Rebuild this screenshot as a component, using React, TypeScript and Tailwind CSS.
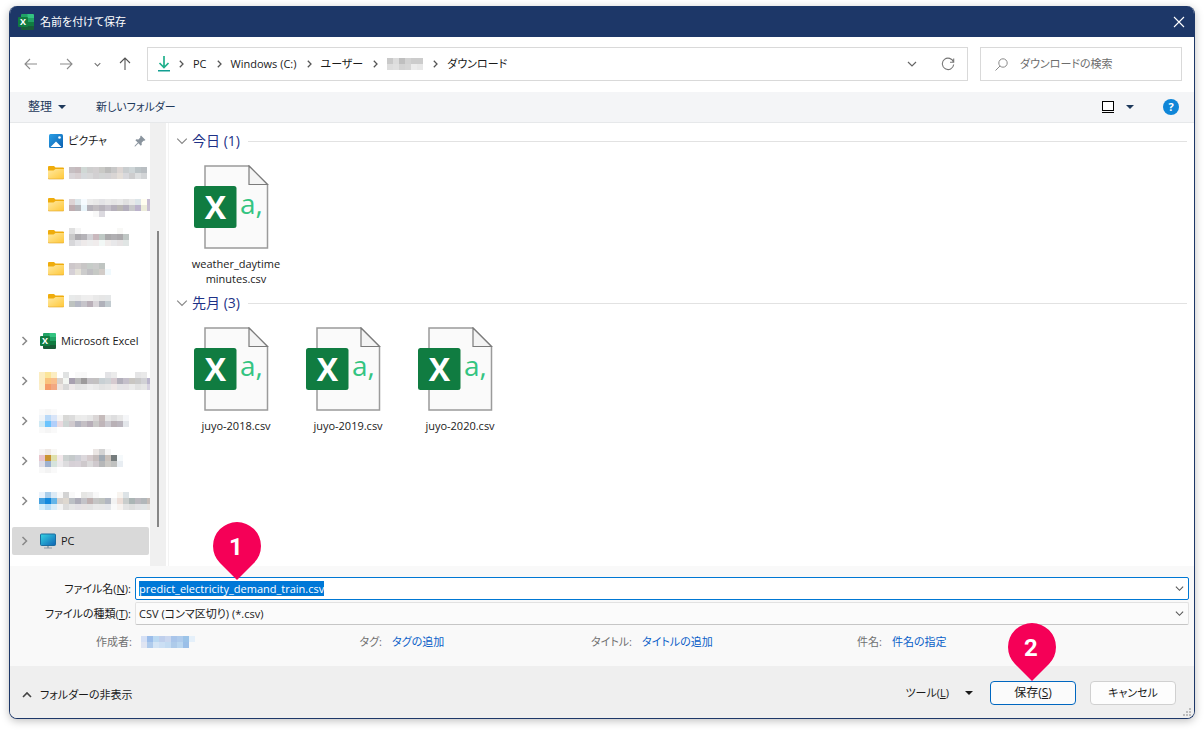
import React, { useEffect, useRef } from "react";

type MosaicProps = {
  rows: string[];
  className?: string;
};

// each row is a list of hex colours, "-" leaves the cell empty
function Mosaic({ rows, className }: MosaicProps) {
  const cells = rows.map((row) => row.split(" "));
  const cols = Math.max(...cells.map((row) => row.length));
  return (
    <svg
      width={cols * 6}
      height={rows.length * 6}
      shapeRendering="crispEdges"
      className={"shrink-0 " + (className || "")}
      aria-hidden="true"
    >
      {cells.map((row, y) =>
        row.map((c, x) =>
          c === "-" ? null : (
            <rect key={x + "-" + y} x={x * 6} y={y * 6} width="6" height="6" fill={"#" + c} />
          )
        )
      )}
    </svg>
  );
}

function ExcelIcon() {
  return (
    <svg width="16" height="16" viewBox="0 0 16 16" className="shrink-0" aria-hidden="true">
      <path d="M4 0h6v4H3V1a1 1 0 0 1 1-1z" fill="#21a366" />
      <path d="M9.500 0H15a1 1 0 0 1 1 1v3H9.500z" fill="#33c481" />
      <path d="M3 4h6.500v4H3z" fill="#107c41" />
      <path d="M9.500 4H16v4H9.500z" fill="#21a366" />
      <path d="M3 8h6.500v4H3z" fill="#185c37" />
      <path d="M9.500 8H16v4H9.500z" fill="#107c41" />
      <path d="M3 12h13v3a1 1 0 0 1-1 1H4a1 1 0 0 1-1-1z" fill="#185c37" />
      <rect y="3" width="10" height="10" rx="1" fill="#107c41" />
      <text x="5" y="11" textAnchor="middle" fontSize="9" fontWeight="700" fill="#fff">
        X
      </text>
    </svg>
  );
}

function PictureIcon() {
  return (
    <svg width="14" height="14" viewBox="0 0 14 14" className="shrink-0" aria-hidden="true">
      <defs>
        <linearGradient id="pic" x1="0" y1="0" x2="1" y2="1">
          <stop offset="0" stopColor="#2a9fe6" />
          <stop offset="1" stopColor="#0a5fb0" />
        </linearGradient>
      </defs>
      <rect width="14" height="14" rx="1.500" fill="url(#pic)" />
      <path d="M1.500 13 7 7.500 12.500 13z" fill="#fff" />
      <circle cx="10.500" cy="3.500" r="1.300" fill="#fff" />
    </svg>
  );
}

function PinIcon() {
  return (
    <svg width="12" height="12" viewBox="0 0 12 12" fill="#8a949e" className="shrink-0" aria-hidden="true">
      <path d="M7 .5 11.500 5l-1.200.8-.8-.1L7.600 7.700l.2 2.100-1 .9L4.400 8.200 1.200 11.400.6 11.500l.1-.7L3.800 7.600 1.400 5.200l.9-1 2.100.2L6.300 2.500l-.1-.9z" />
    </svg>
  );
}

function FolderIcon() {
  return (
    <svg width="16" height="14" viewBox="0 0 16 14" className="shrink-0" aria-hidden="true">
      <defs>
        <linearGradient id="folder" x1="0" y1="0" x2="1" y2="1">
          <stop offset="0" stopColor="#ffe9a2" />
          <stop offset="1" stopColor="#ffc839" />
        </linearGradient>
      </defs>
      <path d="M1 0h5l1.500 1.500H15a1 1 0 0 1 1 1V8H0V1a1 1 0 0 1 1-1z" fill="#efac0c" />
      <path d="M0 4.500h5.500L7.500 3H16v9a1 1 0 0 1-1 1H1a1 1 0 0 1-1-1z" fill="url(#folder)" />
      <path d="M0 12a1 1 0 0 0 1 1h14a1 1 0 0 0 1-1" fill="none" stroke="#e0a52a" strokeWidth=".6" />
    </svg>
  );
}

function MonitorIcon() {
  return (
    <svg width="16" height="16" viewBox="0 0 16 16" className="shrink-0" aria-hidden="true">
      <defs>
        <linearGradient id="screen" x1="0" y1="0" x2="1" y2="1">
          <stop offset="0" stopColor="#36d6e4" />
          <stop offset="1" stopColor="#0f62b4" />
        </linearGradient>
      </defs>
      <path d="M7 12h2v3H7z" fill="#9aa7b2" />
      <path d="M4 14.500h8v1H4z" fill="#8d99a5" />
      <rect x=".5" y="1" width="15" height="11.500" rx="1" fill="url(#screen)" stroke="#1b6d9f" />
    </svg>
  );
}

function CsvIcon() {
  return (
    <svg width="84" height="84" viewBox="0 0 84 84" aria-hidden="true">
      <path d="M11 1h44l18.500 18.500V83H11z" fill="#fafafa" stroke="#9b9b9b" strokeWidth="1.500" />
      <path d="M55 1v18.500h18.500z" fill="#f4f4f4" stroke="#7b7b7b" strokeWidth="1.200" />
      <rect y="21" width="42.500" height="42" rx="2.500" fill="#107c41" />
      <text x="21.500" y="54" textAnchor="middle" fontSize="32" fontWeight="700" fill="#fff">
        X
      </text>
      <text x="46" y="49" fontSize="28" fill="#33c481">
        a,
      </text>
    </svg>
  );
}

type ChevronProps = {
  dir: "right" | "down" | "up";
  size: number;
  color?: string;
  width?: number;
};

const CHEVRONS = {
  right: "M3.500 1 7.500 5 3.500 9",
  down: "M1 3l4 4 4-4",
  up: "M1 7l4-4 4 4",
};

function Chevron({ dir, size, color = "#666", width = 1 }: ChevronProps) {
  return (
    <svg width={size} height={size} viewBox="0 0 10 10" className="shrink-0" aria-hidden="true">
      <path d={CHEVRONS[dir]} fill="none" stroke={color} strokeWidth={width} />
    </svg>
  );
}

function Caret({ color }: { color: string }) {
  return (
    <svg width="8" height="4" viewBox="0 0 8 4" className="shrink-0" aria-hidden="true">
      <path d="M0 0h8L4 4z" fill={color} />
    </svg>
  );
}

function Marker({ n, className }: { n: number; className: string }) {
  return (
    <svg width="48" height="58" viewBox="0 0 48 58" className={"absolute pointer-events-none " + className}>
      <path d="M24 58 7 41A24 24 0 1 1 41 41z" fill="#f50057" />
      <text
        x="23"
        y="33"
        textAnchor="middle"
        fontSize="24"
        fontWeight="700"
        fill="#fff"
        className="font-['Roboto',sans-serif]"
      >
        {n}
      </text>
    </svg>
  );
}

function TitleBar() {
  return (
    <header className="h-[31px] bg-[#1d3768] flex items-center pl-2 pr-[5px] text-white">
      <ExcelIcon />
      <h1 className="ml-[6px] flex-1">名前を付けて保存</h1>
      <button type="button" aria-label="閉じる" className="p-1">
        <svg width="12" height="12" viewBox="0 0 12 12" stroke="#fff" strokeWidth="1.100">
          <path d="M1 1l10 10M11 1 1 11" />
        </svg>
      </button>
    </header>
  );
}

function Crumb({ children }: { children: React.ReactNode }) {
  return (
    <>
      <Chevron dir="right" size={8} color="#555" width={1.6} />
      <button type="button" className="px-px">
        {children}
      </button>
    </>
  );
}

function NavBar() {
  return (
    <div className="h-[55px] flex items-center pl-[3px] pr-3 pb-px">
      <button type="button" aria-label="戻る" className="w-[35px] flex justify-center">
        <svg width="14" height="14" viewBox="0 0 14 14" fill="none" stroke="#8c8c8c" strokeWidth="1.100">
          <path d="M6 2 1 7l5 5M1 7h12" />
        </svg>
      </button>
      <button type="button" aria-label="進む" className="w-[35px] flex justify-center">
        <svg width="14" height="14" viewBox="0 0 14 14" fill="none" stroke="#8c8c8c" strokeWidth="1.100">
          <path d="M8 2l5 5-5 5M13 7H1" />
        </svg>
      </button>
      <button type="button" aria-label="最近表示した場所" className="w-7 flex justify-center">
        <Chevron dir="down" size={7} color="#777" width={1.6} />
      </button>
      <button type="button" aria-label="上へ" className="w-7 flex justify-center">
        <svg width="14" height="14" viewBox="0 0 14 14" fill="none" stroke="#555" strokeWidth="1.100">
          <path d="M2 6l5-5 5 5M7 1v12" />
        </svg>
      </button>

      <div className="ml-2 h-[34px] flex-1 border border-[#d9d9d9] flex items-center pl-[10px] pr-3">
        <nav className="flex items-center gap-[7px] flex-1 text-[#1a1a1a]">
          <svg width="12" height="16" viewBox="0 0 12 16" fill="none" className="shrink-0" aria-hidden="true">
            <path d="M6 0v11M1.500 7 6 11.500 10.500 7" stroke="#20b08c" strokeWidth="1.700" />
            <path d="M0 14.700h12" stroke="#129f92" strokeWidth="1.500" />
          </svg>
          <Crumb>PC</Crumb>
          <Crumb>Windows (C:)</Crumb>
          <Crumb>ユーザー</Crumb>
          <Crumb>
            <Mosaic rows={["c9c9c9 dcdcdc bfbfbf d2d2d2 cccccc cccccc", "dddddd e0e0e0 d3d3d3 d6d6d6 ececec e8e8e8"]} />
          </Crumb>
          <Crumb>ダウンロード</Crumb>
        </nav>
        <button type="button" aria-label="以前の場所" className="mr-6">
          <Chevron dir="down" size={10} color="#666" width={1.2} />
        </button>
        <button type="button" aria-label="最新の情報に更新">
          <svg width="14" height="14" viewBox="0 0 14 14" fill="none" stroke="#777" strokeWidth="1.100">
            <path d="M12.500 5.200A5.700 5.700 0 1 0 12.700 7.500M12.700 1.500v3.700H9" />
          </svg>
        </button>
      </div>

      <label className="ml-3 h-[34px] w-[202px] border border-[#d9d9d9] flex items-center pl-[14px]">
        <svg width="13" height="13" viewBox="0 0 13 13" fill="none" stroke="#8a8a8a" className="shrink-0">
          <circle cx="8" cy="5" r="4.200" />
          <path d="M5 8 .5 12.500" />
        </svg>
        <input
          type="search"
          aria-label="ダウンロードの検索"
          placeholder="ダウンロードの検索"
          className="ml-3 w-full min-w-0 bg-transparent outline-none placeholder:text-[#6d6d6d]"
        />
      </label>
    </div>
  );
}

function Toolbar() {
  return (
    <div className="h-[31px] bg-[#f4f5f7] border-b border-[#e6e8ea] flex items-center pl-[18px] pr-[15px] text-[#1e395b]">
      <button type="button" className="flex items-center gap-[6px] w-[68px] text-[12px]">
        整理
        <Caret color="#1e395b" />
      </button>
      <button type="button">新しいフォルダー</button>
      <button type="button" aria-label="表示方法" className="ml-auto flex items-center gap-3">
        <svg width="12" height="12" viewBox="0 0 12 12" shapeRendering="crispEdges">
          <rect x=".5" y=".5" width="11" height="9" fill="#fff" stroke="#000" />
          <path d="M0 11.500h12" stroke="#000" />
        </svg>
        <Caret color="#1e395b" />
      </button>
      <button
        type="button"
        aria-label="ヘルプ"
        className="ml-[29px] w-4 h-4 rounded-full bg-[#0f86d8] text-white leading-4 font-bold"
      >
        ?
      </button>
    </div>
  );
}

const FOLDERS = [
  [
    "-",
    "c6bfc2 c6babd d0d8d5 cecece d2cfd0 c9c9c6 bcbcbb c8c8c8 dcd5d3 c9cdcf ced5d7 bcc4c7 b9bec2",
    "d9d5d8 d8d0d2 d6d9dc d8d8d9 d2d0d2 d2d4d4 d3d2d4 d9d5d4 e4ded8 d8d8dc cdcdce dddfe0 d2d4d6",
    "-",
  ],
  [
    "-",
    "ddd3d4 dce6ea f6fbff ececec e8e8e8 e3e3e6 e9e9e9 e5e5e5 e9e9e9 e0e0e0 e9e9e9 dce5e9 fffdf0 c6bcd2",
    "bfadb0 b5b5ba e8f4fa b5b2ba c1bdc1 b8b4bc c4c0c9 b5b0bb bab7b4 b3aebc c7c7c9 bbb2cb ececda c8bfd2",
    "- - - - f8f8f8 dbd9df",
  ],
  [
    "e0e0e0 f5f5f5 - - - - - - f8f8f6 -",
    "c9c9c9 acaaae b5b3b8 d2d2d6 c9b8bd bfc9c5 aaa9ab b0afb2 aba9ac bfc6c4",
    "d7d7da e5e5e8 eeeaea eeeeee f0ecec f2f8f6 f0eceb e8e8ea e6e3e4 e0e5e4",
  ],
  [
    "cdc7ca d2cdcd c8c6c6 c6ccc8 cbcbcb bfc4c1 -",
    "d5d0d6 e5e2d9 cccccc c0bfc3 c6c9c5 d2ccc8 f0f9fd",
  ],
  [
    "e8eaea e8e8e8 eeeeee efeeee e9e9e9 e6e6e6 e5e7e8",
    "bec3c0 b5b8c4 c6c4ca b9afb8 d9d5d9 b0b1ba c2cbd0",
  ],
];

const DRIVES = [
  [
    "fbedc2 fbe59a fbedc2 - e0e2e2 - f9f9f9 f8f8f8 - - - e3e3e6 ebebeb - - - e5e5e6 e9e9e9 -",
    "fbedc2 f9c27d f9be8b d8d3cf f3f6f2 a8a1b0 bababa 9d9b9c c3c0c4 c3c1c1 c8d0d4 cfd4d7 d6cad0 b2afbb c4bfca c9c6c2 c9c9c9 d1d1d5 bab5cc",
    "fbeeca f59c69 f2a883 ece6e3 d8d8d8 eeeaea e4e4e4 e6e6e6 eeeeee eaeaea e3e3e3 e6e6e6 efe8e8 e5e4e7 e6e3e6 ebebeb e2e2e2 e6e6e6 d6d2e0",
  ],
  [
    "fafafa f6f6f6 fafafa",
    "f0f4f8 b9d9f8 d9e5f8 f5f5f5 d8d8d6 dcdcdc ebebea ececec e6e6e6 dad6d6 c5bbbb e6e6e6 dededf e8e8e8 f5f6f8",
    "cfe9f4 6bc4fd b2cffa eadbe0 ced5d4 d0cace b3b3bf c4bfc4 b7aeb8 cac9c8 bfb5b9 cbc9cf b9b1b6 bbb6be e3e6ea",
    "f9f9f9 f5f5f5 f9f9f9",
  ],
  [
    "f6f4f4 eee8e4 f8f7f5 - - - - - - ebe6e4 d3d3d3 f5f5f5",
    "e8c4cc ca9331 dfe0ac f2e8eb ccd2d1 c5cacb cdced5 dcd8dc d5cbcd c5bdbc a2abb4 c9c1bb 757c7d f5f9fb",
    "dddce5 9eb1cf d6e3dd eceaec dddcde d6d0d6 d8d2d8 cec9cc dbdadb cfc9cd b6b7b8 cbc9c5 c0c1c0 e8edf2",
    "f8f8f8 f3f3f3 f9f9f9",
  ],
  [
    "e9f2fb a9cdea dceaf5 f8f8f8 d3d3d3 f9f9f9 - e6e6e4 eaeaea f8f8f8 - - - f8f4ef dde3e6",
    "44a1e0 148ade 65b5e8 d6d1cd ded8d0 bcc0c5 adacb8 c3c3c8 bfb0b0 c5c5c5 bfc3bf b2b7c1 f2f2f2 ecded8 c9cdcc abb5b5 bbb9bf b2b7ba c6bdb8",
    "d6effb b8def8 d9edf9 f3f3f3 dcdcdc e6e6e6 e3e1e5 e6e2e2 e3e3e3 e9e9e9 e8e8e8 e5e7ea f9f9f9 f6f2ef e4e4e4 dedede e3e3e5 e2e5e6 e6e3e0",
  ],
];

function Sidebar() {
  return (
    <aside className="w-[159px] shrink-0 flex border-r border-[#f3f3f3] pr-[2px]">
      <ul className="flex-1 min-w-0 overflow-hidden pt-[2px] pb-[5px]">
        <li className="h-8 flex items-center pl-[39px] pr-1">
          <PictureIcon />
          <span className="ml-[5px] flex-1">ピクチャ</span>
          <PinIcon />
        </li>
        {FOLDERS.map((rows, i) => (
          <li key={i} className="h-8 flex items-center pl-[38px]">
            <FolderIcon />
            <Mosaic rows={rows} className="ml-[5px]" />
          </li>
        ))}
        <li className="mt-1 h-10 flex items-center pl-[9px]">
          <Chevron dir="right" size={10} color="#888" width={1.5} />
          <span className="ml-[11px] flex items-center gap-[5px] whitespace-nowrap">
            <ExcelIcon />
            Microsoft Excel
          </span>
        </li>
        {DRIVES.map((rows, i) => (
          <li key={i} className="h-10 flex items-center pl-[9px] gap-[10px]">
            <Chevron dir="right" size={10} color="#888" width={1.5} />
            <Mosaic rows={rows} />
          </li>
        ))}
        <li className="h-10 flex items-center pl-[2px] pr-px">
          <button type="button" className="h-7 w-full rounded-[2px] bg-[#d9d9d9] flex items-center pl-[7px]">
            <Chevron dir="right" size={10} color="#888" width={1.5} />
            <span className="ml-[11px] flex items-center gap-[5px]">
              <MonitorIcon />
              PC
            </span>
          </button>
        </li>
      </ul>
      <div className="w-4 shrink-0 bg-[#f0f0f0] flex flex-col items-center pt-[108px]">
        <div className="w-[2px] h-[296px] bg-[#868686]" />
      </div>
    </aside>
  );
}

type GroupProps = {
  label: string;
  files: string[];
};

function FileGroup({ label, files }: GroupProps) {
  return (
    <section>
      <h2 className="h-5 flex items-center text-[14px] text-[#1e3287] whitespace-nowrap">
        <Chevron dir="down" size={12} color="#888" width={1} />
        <span className="ml-1 mr-2">{label}</span>
        <span className="flex-1 h-px bg-[#e2e2e2]" />
      </h2>
      <ul className="mt-[14px] pl-1 flex flex-wrap">
        {files.map((name) => (
          <li key={name} className="w-28 flex flex-col items-center pb-[7px]">
            <CsvIcon />
            <span className="mt-[7px] text-center leading-[15px]">
              {name.split("|").map((part) => (
                <span key={part} className="block">
                  {part}
                </span>
              ))}
            </span>
          </li>
        ))}
      </ul>
    </section>
  );
}

const PROPS = [
  { label: "タグ:", value: "タグの追加" },
  { label: "タイトル:", value: "タイトルの追加" },
  { label: "件名:", value: "件名の指定" },
];

function FileFields() {
  const nameRef = useRef<HTMLInputElement>(null);

  useEffect(() => {
    nameRef.current?.focus();
    nameRef.current?.select();
  }, []);

  return (
    <div className="h-[100px] bg-[#f9f9f9] pt-[11px] pr-[5px]">
      <div className="flex items-center">
        <label htmlFor="file-name" className="w-[125px] pr-1 text-right whitespace-nowrap">
          ファイル名(<u>N</u>):
        </label>
        <div className="relative flex-1 h-[23px] border border-[#0078d4] rounded-[2px] bg-white flex items-center">
          <input
            id="file-name"
            ref={nameRef}
            defaultValue="predict_electricity_demand_train.csv"
            className="flex-1 min-w-0 px-[3px] h-[15px] leading-[15px] outline-none caret-transparent selection:bg-[#0078d7] selection:text-white"
          />
          <button type="button" aria-label="履歴" className="px-1">
            <Chevron dir="down" size={9} color="#555" width={1.2} />
          </button>
          <Marker n={1} className="left-[77px] bottom-[19px]" />
        </div>
      </div>
      <div className="mt-[2px] flex items-center">
        <label htmlFor="file-type" className="w-[125px] pr-1 text-right whitespace-nowrap">
          ファイルの種類(<u>T</u>):
        </label>
        <div className="relative flex-1 h-[23px] border border-[#e2e2e2] border-b-[#c6c6c6] rounded-[2px] bg-[#fbfbfb] flex items-center">
          <select id="file-type" className="appearance-none w-full px-[3px] outline-none bg-transparent">
            <option>CSV (コンマ区切り) (*.csv)</option>
          </select>
          <span className="absolute right-1 pointer-events-none">
            <Chevron dir="down" size={9} color="#555" width={1.2} />
          </span>
        </div>
      </div>
      <dl className="mt-[9px] pr-[179px] grid grid-cols-4 text-[#707070] whitespace-nowrap">
        <div className="flex items-center">
          <dt className="w-[122px] text-right">作成者:</dt>
          <dd className="ml-[9px]">
            <Mosaic
              rows={[
                "d5e0f5 9bbdea bbd9f2 bfcfec cad7ef a9c5ea afcbec 9bc3e8 e5f0fa",
                "e0e5f2 afcbec d3e4f5 cbdff4 c3dbf2 aecbea b9d6f0 9bbfe8 -",
              ]}
            />
          </dd>
        </div>
        {PROPS.map((p) => (
          <div key={p.label} className="flex items-center">
            <dt className="w-[122px] text-right">{p.label}</dt>
            <dd className="ml-[10px]">
              <a href="#" className="text-[#0a5fc8]">
                {p.value}
              </a>
            </dd>
          </div>
        ))}
      </dl>
    </div>
  );
}

function Footer() {
  return (
    <footer className="relative h-[52px] bg-[#efefef] flex items-center pl-3 pr-[18px] pt-[2px]">
      <button type="button" className="self-end mb-[15px] flex items-center gap-2">
        <Chevron dir="up" size={10} color="#444" width={1.6} />
        フォルダーの非表示
      </button>
      <button type="button" className="ml-auto mr-[17px] flex items-center gap-4">
        <span>
          ツール(<u>L</u>)
        </span>
        <Caret color="#1a1a1a" />
      </button>
      <div className="relative">
        <button type="button" className="block w-[86px] h-6 rounded-[4px] border border-[#0067c0] bg-[#fbfbfb] text-[12px]">
          保存(<u>S</u>)
        </button>
        <Marker n={2} className="left-[18px] bottom-6" />
      </div>
      <button type="button" className="ml-[14px] w-[86px] h-6 rounded-[4px] border border-[#d0d0d0] bg-[#fdfdfd]">
        キャンセル
      </button>
      <svg width="8" height="8" viewBox="0 0 8 8" fill="#bdbdbd" className="absolute right-[3px] bottom-[2px]" aria-hidden="true">
        <path d="M6 0h2v2H6zM3 3h2v2H3zM6 3h2v2H6zM0 6h2v2H0zM3 6h2v2H3zM6 6h2v2H6z" />
      </svg>
    </footer>
  );
}

export default function App() {
  return (
    <div className="min-h-screen bg-white flex flex-col pt-[6px] px-[9px] pb-3 text-[11px] leading-[16px] text-[#1a1a1a] font-['Open_Sans','Noto_Sans_CJK_JP',sans-serif] [font-feature-settings:'palt']">
      <main className="flex-1 flex flex-col rounded-lg border border-t-0 border-[#1d3768] overflow-hidden bg-white shadow-[0_2px_8px_rgba(0,0,0,0.25)]">
        <TitleBar />
        <NavBar />
        <Toolbar />
        <div className="flex-1 flex">
          <Sidebar />
          <div className="flex-1 pt-2 pl-[7px] pr-[7px]">
            <FileGroup label="今日 (1)" files={["weather_daytime|minutes.csv"]} />
            <FileGroup label="先月 (3)" files={["juyo-2018.csv", "juyo-2019.csv", "juyo-2020.csv"]} />
          </div>
        </div>
        <FileFields />
        <Footer />
      </main>
    </div>
  );
}
